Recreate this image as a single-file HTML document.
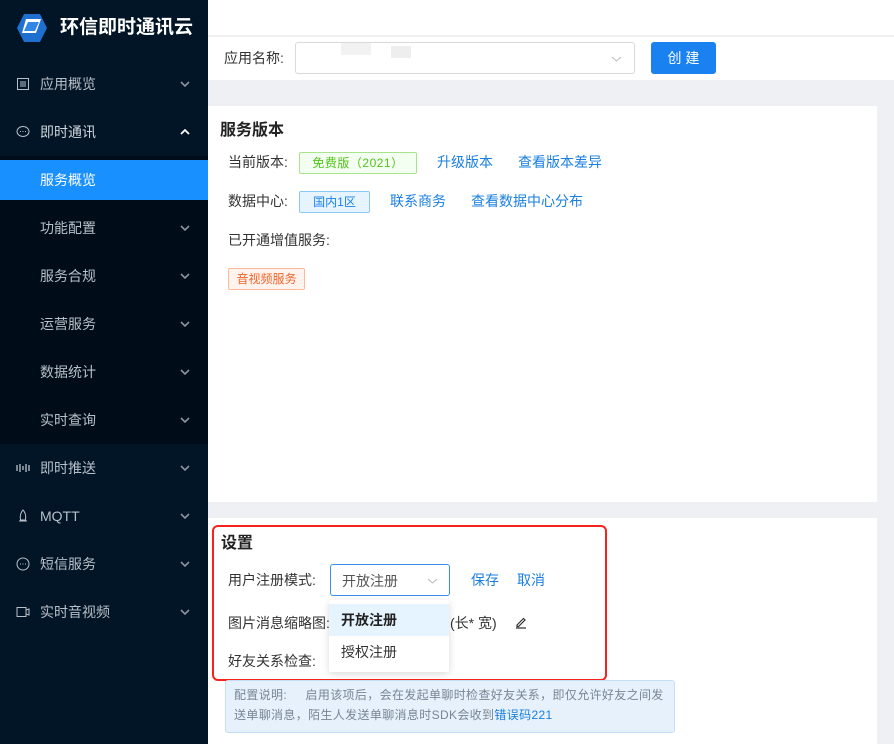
<!DOCTYPE html>
<html><head><meta charset="utf-8"><style>
*{margin:0;padding:0;box-sizing:border-box}
body{width:894px;height:744px;overflow:hidden;background:#eef0f4;font-family:"Liberation Sans","Noto Sans CJK SC",sans-serif;font-size:14px;color:#333;position:relative}
.a{position:absolute}
.sb{left:0;top:0;width:208px;height:744px;background:#021526}
.mi{position:absolute;left:0;width:208px;height:48px;line-height:48px;color:#b8bfc8;font-size:14px}
.mi .t{position:absolute;left:40px}
.mi .ic{position:absolute;left:16px;top:17px;width:14px;height:14px;color:#b8bfc8}
.mi .ch{position:absolute;left:180px;top:21px;width:10px;height:6px}
.link{color:#1a7fe0}
.tag{position:absolute;height:22px;line-height:20px;font-size:12px;text-align:center;border-radius:2px;border:1px solid}
</style></head><body>
<div class="a sb"></div>
<svg class="a" style="left:16px;top:13px" width="32" height="30" viewBox="0 0 32 30"><polygon points="8,1 24,1 31,15 24,29 8,29 1,15" fill="#1f6fd0"/><polygon points="10,6 25,6 20,20 6,20" fill="#fff"/><polygon points="12,9 23,9 19,18 8,18" fill="#2f86e6"/></svg>
<div class="a" style="left:60px;top:14px;color:#fff;font-size:19px;font-weight:bold;line-height:28px">环信即时通讯云</div>
<div class="a" style="left:0;top:156px;width:208px;height:288px;background:#000d18"></div>
<div class="a" style="left:0;top:160px;width:208px;height:40px;background:#1890ff"></div>
<div class="mi" style="top:60px"><svg class="ic" viewBox="0 0 14 14"><rect x="1.5" y="1.5" width="11" height="11" fill="none" stroke="currentColor"/><path d="M4 5h6M4 7h6M4 9h6" stroke="currentColor"/></svg><span class="t">应用概览</span><svg class="ch" viewBox="0 0 10 6"><path d="M1 1l4 4 4-4" fill="none" stroke="#8a939e" stroke-width="1.6"/></svg></div>
<div class="mi" style="top:108px;color:#d0d5db"><svg class="ic" viewBox="0 0 14 14"><ellipse cx="7" cy="6.5" rx="6" ry="5" fill="none" stroke="currentColor"/><path d="M4 6.5h1M6.5 6.5h1M9 6.5h1" stroke="currentColor"/></svg><span class="t">即时通讯</span><svg class="ch" viewBox="0 0 10 6"><path d="M1 5l4-4 4 4" fill="none" stroke="#fff" stroke-width="1.8"/></svg></div>
<div class="mi" style="top:156px;color:#fff"><span class="t">服务概览</span></div>
<div class="mi" style="top:204px"><span class="t">功能配置</span><svg class="ch" viewBox="0 0 10 6"><path d="M1 1l4 4 4-4" fill="none" stroke="#8a939e" stroke-width="1.6"/></svg></div>
<div class="mi" style="top:252px"><span class="t">服务合规</span><svg class="ch" viewBox="0 0 10 6"><path d="M1 1l4 4 4-4" fill="none" stroke="#8a939e" stroke-width="1.6"/></svg></div>
<div class="mi" style="top:300px"><span class="t">运营服务</span><svg class="ch" viewBox="0 0 10 6"><path d="M1 1l4 4 4-4" fill="none" stroke="#8a939e" stroke-width="1.6"/></svg></div>
<div class="mi" style="top:348px"><span class="t">数据统计</span><svg class="ch" viewBox="0 0 10 6"><path d="M1 1l4 4 4-4" fill="none" stroke="#8a939e" stroke-width="1.6"/></svg></div>
<div class="mi" style="top:396px"><span class="t">实时查询</span><svg class="ch" viewBox="0 0 10 6"><path d="M1 1l4 4 4-4" fill="none" stroke="#8a939e" stroke-width="1.6"/></svg></div>
<div class="mi" style="top:444px"><svg class="ic" viewBox="0 0 14 14"><path d="M1 4v6M13 4v6M4 3v8M10 3v8M7 5v4" stroke="currentColor" stroke-width="1.3"/></svg><span class="t">即时推送</span><svg class="ch" viewBox="0 0 10 6"><path d="M1 1l4 4 4-4" fill="none" stroke="#8a939e" stroke-width="1.6"/></svg></div>
<div class="mi" style="top:492px"><svg class="ic" viewBox="0 0 14 14"><path d="M7 1C4 4 4 8 4.5 11h5C10 8 10 4 7 1zM3 12h8" fill="none" stroke="currentColor"/></svg><span class="t">MQTT</span><svg class="ch" viewBox="0 0 10 6"><path d="M1 1l4 4 4-4" fill="none" stroke="#8a939e" stroke-width="1.6"/></svg></div>
<div class="mi" style="top:540px"><svg class="ic" viewBox="0 0 14 14"><circle cx="7" cy="7" r="6" fill="none" stroke="currentColor"/><path d="M4 7h1M6.5 7h1M9 7h1" stroke="currentColor"/></svg><span class="t">短信服务</span><svg class="ch" viewBox="0 0 10 6"><path d="M1 1l4 4 4-4" fill="none" stroke="#8a939e" stroke-width="1.6"/></svg></div>
<div class="mi" style="top:588px"><svg class="ic" viewBox="0 0 14 14"><rect x="1" y="2.5" width="9" height="9" fill="none" stroke="currentColor"/><path d="M10 5l3-1v6l-3-1" fill="none" stroke="currentColor"/></svg><span class="t">实时音视频</span><svg class="ch" viewBox="0 0 10 6"><path d="M1 1l4 4 4-4" fill="none" stroke="#8a939e" stroke-width="1.6"/></svg></div>

<div class="a" style="left:208px;top:0;width:686px;height:36px;background:#fff;border-bottom:1px solid #f0f0f0"></div>
<div class="a" style="left:208px;top:37px;width:686px;height:43px;background:#fff"></div>
<div class="a" style="left:224px;top:48px;line-height:20px">应用名称:</div>
<div class="a" style="left:295px;top:42px;width:340px;height:32px;border:1px solid #d9d9d9;border-radius:3px;background:#fff"><svg style="position:absolute;right:12px;top:13px" width="11" height="6" viewBox="0 0 11 6"><path d="M1 1l4.5 4 4.5-4" fill="none" stroke="#bbb"/></svg><div style="position:absolute;left:45px;top:0;width:30px;height:12px;background:#f2f2f2"></div><div style="position:absolute;left:95px;top:3px;width:20px;height:12px;background:#eee"></div></div>
<div class="a" style="left:651px;top:42px;width:65px;height:32px;background:#1a82f0;border-radius:3px;color:#fff;text-align:center;line-height:32px">创 建</div>

<div class="a" style="left:208px;top:106px;width:669px;height:396px;background:#fff"></div>
<div class="a" style="left:220px;top:120px;font-size:16px;font-weight:bold;line-height:22px;color:#222">服务版本</div>
<div class="a" style="left:228px;top:152px;line-height:20px">当前版本:</div>
<div class="tag" style="left:299px;top:152px;width:118px;background:#f3fff0;border-color:#a8e58a;color:#52c41a;letter-spacing:.5px">免费版（2021）</div>
<div class="a link" style="left:437px;top:152px;line-height:20px">升级版本</div>
<div class="a link" style="left:518px;top:152px;line-height:20px">查看版本差异</div>
<div class="a" style="left:228px;top:191px;line-height:20px">数据中心:</div>
<div class="tag" style="left:299px;top:191px;width:71px;background:#e6f4ff;border-color:#8cc8f5;color:#1a82f0">国内1区</div>
<div class="a link" style="left:390px;top:191px;line-height:20px">联系商务</div>
<div class="a link" style="left:471px;top:191px;line-height:20px">查看数据中心分布</div>
<div class="a" style="left:228px;top:230px;line-height:20px">已开通增值服务:</div>
<div class="tag" style="left:228px;top:268px;width:77px;background:#fff3ed;border-color:#ffb899;color:#f0642a">音视频服务</div>

<div class="a" style="left:208px;top:518px;width:669px;height:226px;background:#fff"></div>
<div class="a" style="left:221px;top:533px;font-size:16px;font-weight:bold;line-height:22px;color:#222">设置</div>
<div class="a" style="left:228px;top:570px;line-height:20px">用户注册模式:</div>
<div class="a" style="left:330px;top:564px;width:120px;height:32px;border:1px solid #3a8ef0;border-radius:3px;background:#fff"><span style="position:absolute;left:11px;top:6px;color:#555">开放注册</span><svg style="position:absolute;right:11px;top:13px" width="11" height="6" viewBox="0 0 11 6"><path d="M1 1l4.5 4 4.5-4" fill="none" stroke="#bbb"/></svg></div>
<div class="a link" style="left:471px;top:570px;line-height:20px">保存</div>
<div class="a link" style="left:517px;top:570px;line-height:20px">取消</div>
<div class="a" style="left:228px;top:613px;line-height:20px">图片消息缩略图: <span style="color:#ccc">170px</span>(长* 宽)</div>
<div class="a" style="left:450px;top:613px;line-height:20px">(长* 宽)</div>
<svg class="a" style="left:514px;top:615px" width="14" height="14" viewBox="0 0 14 14"><path d="M3 10l6.5-6.5 1.5 1.5L4.5 11.5H3zM2 13h10" fill="none" stroke="#333" stroke-width="1.2"/></svg>
<div class="a" style="left:228px;top:651px;line-height:20px">好友关系检查:</div>
<div class="a" style="left:329px;top:600px;width:120px;height:72px;background:#fff;box-shadow:0 2px 8px rgba(0,0,0,.15);border-radius:2px">
<div style="height:32px;margin-top:4px;background:#e6f4ff;line-height:32px;padding-left:12px;font-weight:bold;color:#222">开放注册</div>
<div style="height:32px;line-height:32px;padding-left:12px;color:#333">授权注册</div></div>
<div class="a" style="left:212px;top:525px;width:395px;height:156px;border:2.5px solid #f5231b;border-radius:6px"></div>
<div class="a" style="left:225px;top:680px;width:450px;height:53px;background:#e6f1fc;border:1px solid #c5def7;border-radius:3px;padding:4px 6px 4px 8px;font-size:12px;line-height:20px;color:#7a8594;letter-spacing:.35px">配置说明:&nbsp;&nbsp;&nbsp;&nbsp;&nbsp;启用该项后，会在发起单聊时检查好友关系，即仅允许好友之间发送单聊消息，陌生人发送单聊消息时SDK会收到<span class="link">错误码221</span></div>
</body></html>
